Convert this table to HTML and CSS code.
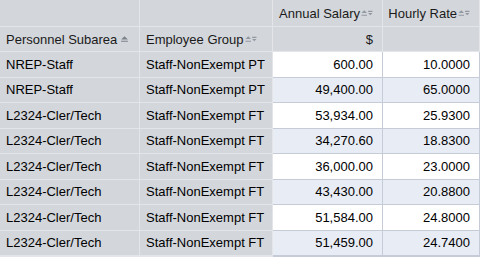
FILE: index.html
```html
<!DOCTYPE html>
<html>
<head>
<meta charset="utf-8">
<link rel="stylesheet" href="styles.css">
</head>
<body>
<div class="grid">
  <div class="cell hd"></div>
  <div class="cell hd"></div>
  <div class="cell hd num">Annual Salary<svg class="sort" viewBox="0 0 11 7"><path d="M0.5 3.5 L3 1 L5.5 3.5 Z M0.5 5 H5.5 V6 H0.5 Z M6.5 1.5 H10.5 V2.5 H6.5 Z M6.5 3.5 H10.5 L8.5 5.5 Z"/></svg></div>
  <div class="cell hd num">Hourly Rate<svg class="sort" viewBox="0 0 11 7"><path d="M0.5 3.5 L3 1 L5.5 3.5 Z M0.5 5 H5.5 V6 H0.5 Z M6.5 1.5 H10.5 V2.5 H6.5 Z M6.5 3.5 H10.5 L8.5 5.5 Z"/></svg></div>

  <div class="cell hd">Personnel Subarea<svg class="sort asc" viewBox="0 0 8 7"><path d="M1 4 L4 1 L7 4 Z M1 5 H7 V6 H1 Z"/></svg></div>
  <div class="cell hd">Employee Group<svg class="sort" viewBox="0 0 11 7"><path d="M0.5 3.5 L3 1 L5.5 3.5 Z M0.5 5 H5.5 V6 H0.5 Z M6.5 1.5 H10.5 V2.5 H6.5 Z M6.5 3.5 H10.5 L8.5 5.5 Z"/></svg></div>
  <div class="cell hd num unit">$</div>
  <div class="cell hd num"></div>

  <div class="cell rh">NREP-Staff</div><div class="cell rh">Staff-NonExempt PT</div><div class="cell d num">600.00</div><div class="cell d num">10.0000</div>
  <div class="cell rh">NREP-Staff</div><div class="cell rh">Staff-NonExempt PT</div><div class="cell d alt num">49,400.00</div><div class="cell d alt num">65.0000</div>
  <div class="cell rh">L2324-Cler/Tech</div><div class="cell rh">Staff-NonExempt FT</div><div class="cell d num">53,934.00</div><div class="cell d num">25.9300</div>
  <div class="cell rh">L2324-Cler/Tech</div><div class="cell rh">Staff-NonExempt FT</div><div class="cell d alt num">34,270.60</div><div class="cell d alt num">18.8300</div>
  <div class="cell rh">L2324-Cler/Tech</div><div class="cell rh">Staff-NonExempt FT</div><div class="cell d num">36,000.00</div><div class="cell d num">23.0000</div>
  <div class="cell rh">L2324-Cler/Tech</div><div class="cell rh">Staff-NonExempt FT</div><div class="cell d alt num">43,430.00</div><div class="cell d alt num">20.8800</div>
  <div class="cell rh">L2324-Cler/Tech</div><div class="cell rh">Staff-NonExempt FT</div><div class="cell d num">51,584.00</div><div class="cell d num">24.8000</div>
  <div class="cell rh">L2324-Cler/Tech</div><div class="cell rh">Staff-NonExempt FT</div><div class="cell d alt num">51,459.00</div><div class="cell d alt num">24.7400</div>
  <div class="cell rh"></div><div class="cell rh"></div><div class="cell d num"></div><div class="cell d num"></div>
</div>
</body>
</html>
```

FILE: styles.css
```css
html, body {
  margin: 0;
  padding: 0;
  background: #ffffff;
  height: 257px;
  overflow: hidden;
}
body {
  font-family: "Liberation Sans", Arial, sans-serif;
  font-size: 13px;
  color: #000;
}
.grid {
  display: grid;
  grid-template-columns: 140px 133px 110px 97px;
  grid-template-rows: 27px 25px repeat(8, 25.5px) 1px;
  width: 480px;
  height: 257px;
  overflow: hidden;
}
.cell {
  box-sizing: border-box;
  display: flex;
  align-items: center;
  white-space: nowrap;
  overflow: hidden;
  border-right: 1px solid #e3e5e9;
  border-bottom: 1px solid #e3e5e9;
  padding: 0 6px;
}
.hd {
  background: #d3d6db;
  color: #1a1a1a;
}
.rh {
  background: #d3d6db;
}
.d {
  background: #ffffff;
  border-right-color: #c6ccd7;
  border-bottom-color: #c6ccd7;
}
.d.alt {
  background: #e8ecf4;
}
.num {
  justify-content: flex-end;
  padding-right: 9px;
}
.sort {
  width: 12px;
  height: 8px;
  margin-left: 1px;
  fill: #9297a0;
  flex: none;
}
.sort.asc {
  width: 9px;
  margin-left: 3px;
  fill: #7d828a;
}
```
